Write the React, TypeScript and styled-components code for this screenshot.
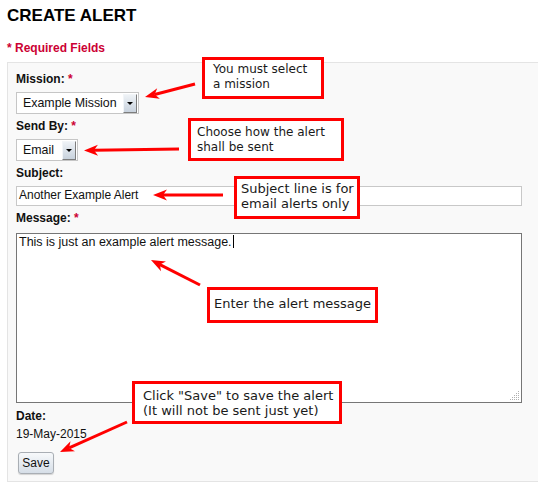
import React from 'react';
import styled, { createGlobalStyle } from 'styled-components';

const GlobalStyle = createGlobalStyle`
  html, body { margin: 0; padding: 0; background: #fff; }
  body { font-family: "Liberation Sans", Arial, sans-serif; color: #111; overflow: hidden; }
`;

const Page = styled.div`
  position: relative;
  width: 538px;
  height: 486px;
  overflow: hidden;
  padding-left: 7px;
  box-sizing: border-box;
`;

const Title = styled.h1`
  margin: 6px 0 0;
  font-size: 17px;
  line-height: 20px;
  font-weight: bold;
  color: #000;
`;

const Required = styled.div`
  margin-top: 15px;
  font-size: 12px;
  line-height: 14px;
  font-weight: bold;
  color: #cc0033;
`;

const Panel = styled.div`
  margin-top: 7px;
  width: 560px;
  box-sizing: border-box;
  background: #f9f9f9;
  border: 1px solid #e4e4e4;
  padding: 9px 0 7px 8px;
`;

const Label = styled.div<{ $mb?: number }>`
  font-size: 12px;
  line-height: 14px;
  font-weight: bold;
  color: #111;
  margin-bottom: ${(p) => p.$mb ?? 6}px;
`;

const Star = styled.span`
  color: #cc0033;
`;

const Select = styled.div<{ $w: number }>`
  display: flex;
  align-items: center;
  box-sizing: border-box;
  width: ${(p) => p.$w}px;
  height: 22px;
  margin-bottom: 5px;
  background: #fff;
  border: 1px solid #c6c6c6;
  padding-right: 1px;
`;

const SelectValue = styled.span`
  flex: 1;
  padding-left: 6px;
  font-size: 12.4px;
  color: #111;
  white-space: nowrap;
`;

const SelectButton = styled.span`
  width: 14px;
  height: 19px;
  box-sizing: border-box;
  display: flex;
  align-items: center;
  justify-content: center;
  background: linear-gradient(#eef2f6, #c8d2dd);
  border: 1px solid;
  border-color: #f2f5f8 #7d7d7d #7d7d7d #f2f5f8;
`;

const DownCaret = styled.span`
  width: 0;
  height: 0;
  border-left: 3px solid transparent;
  border-right: 3px solid transparent;
  border-top: 3px solid #000;
`;

const TextInput = styled.div`
  width: 506px;
  height: 20px;
  box-sizing: border-box;
  border: 1px solid #c8c8c8;
  background: #fff;
  padding-left: 2px;
  font-size: 12px;
  line-height: 17px;
  margin-bottom: 5px;
  white-space: nowrap;
`;

const TextArea = styled.div`
  position: relative;
  width: 506px;
  height: 170px;
  box-sizing: border-box;
  border: 1px solid #767676;
  background: #fff;
  padding: 1px 2px;
  font-size: 12.5px;
  line-height: 14px;
  margin-bottom: 6px;
`;

const TypingCaret = styled.span`
  display: inline-block;
  width: 1px;
  height: 13px;
  margin-left: 1px;
  background: #000;
  vertical-align: -2px;
`;

const Grip = styled.svg`
  position: absolute;
  right: 1px;
  bottom: 1px;
`;

const Value = styled.div`
  font-size: 12px;
  line-height: 14px;
  margin: -2px 0 11px;
  color: #111;
`;

const SaveButton = styled.button`
  display: block;
  margin-left: 2px;
  width: 36px;
  height: 22px;
  padding: 0;
  font-family: inherit;
  font-size: 12px;
  color: #111;
  border: 1px solid #a9aeb4;
  border-radius: 3px;
  background: linear-gradient(#f7f9fb, #d6dee7);
  box-shadow: 0 1px 1px rgba(0, 0, 0, 0.15);
`;

const Note = styled.div<{
  $x: number;
  $y: number;
  $w: number;
  $h: number;
  $pt: number;
  $pl: number;
  $fs: number;
}>`
  position: absolute;
  left: ${(p) => p.$x}px;
  top: ${(p) => p.$y}px;
  width: ${(p) => p.$w}px;
  height: ${(p) => p.$h}px;
  box-sizing: border-box;
  border: 3px solid #ff0000;
  background: #fff;
  padding: ${(p) => p.$pt}px 0 0 ${(p) => p.$pl}px;
  font-family: "DejaVu Sans", sans-serif;
  font-size: ${(p) => p.$fs}px;
  line-height: 15px;
  color: #1a1a1a;
  white-space: nowrap;
`;

const Overlay = styled.svg`
  position: absolute;
  left: 0;
  top: 0;
  pointer-events: none;
`;

type Pt = [number, number, number, number];
const arrows: Pt[] = [
  [195, 84, 145, 97],
  [179, 149, 84, 150.5],
  [223, 195, 153, 195],
  [200, 285, 151, 260],
  [127, 422, 60, 452],
];

function Arrow({ a }: { a: Pt }) {
  const [x1, y1, x2, y2] = a;
  const dx = x2 - x1;
  const dy = y2 - y1;
  const len = Math.hypot(dx, dy);
  const ux = dx / len;
  const uy = dy / len;
  const px = -uy;
  const py = ux;
  const L = 14;
  const W = 5.5;
  const N = 10;
  const bx = x2 - ux * L;
  const by = y2 - uy * L;
  const nx = x2 - ux * N;
  const ny = y2 - uy * N;
  const pts = [
    [x2, y2],
    [bx + px * W, by + py * W],
    [nx, ny],
    [bx - px * W, by - py * W],
  ]
    .map((p) => p.map((v) => v.toFixed(1)).join(','))
    .join(' ');
  return (
    <g>
      <line x1={x1} y1={y1} x2={nx} y2={ny} stroke="#ff0000" strokeWidth={3} />
      <polygon points={pts} fill="#ff0000" />
    </g>
  );
}

const gripDots: [number, number][] = [
  [8, 0],
  [6, 2], [8, 2],
  [4, 4], [6, 4], [8, 4],
  [2, 6], [4, 6], [6, 6], [8, 6],
  [0, 8], [2, 8], [4, 8], [6, 8], [8, 8],
];

export default function App() {
  return (
    <>
      <GlobalStyle />
      <Page>
        <Title>CREATE ALERT</Title>
        <Required>* Required Fields</Required>
        <Panel>
          <Label>
            Mission: <Star>*</Star>
          </Label>
          <Select $w={123}>
            <SelectValue>Example Mission</SelectValue>
            <SelectButton>
              <DownCaret />
            </SelectButton>
          </Select>
          <Label>
            Send By: <Star>*</Star>
          </Label>
          <Select $w={62}>
            <SelectValue>Email</SelectValue>
            <SelectButton>
              <DownCaret />
            </SelectButton>
          </Select>
          <Label>Subject:</Label>
          <TextInput>Another Example Alert</TextInput>
          <Label $mb={8}>
            Message: <Star>*</Star>
          </Label>
          <TextArea>
            This is just an example alert message.
            <TypingCaret />
            <Grip width={10} height={10} viewBox="0 0 10 10">
              {gripDots.map(([x, y], i) => (
                <rect key={i} x={x} y={y} width={1} height={1} fill="#b0b0b0" />
              ))}
            </Grip>
          </TextArea>
          <Label>Date:</Label>
          <Value>19-May-2015</Value>
          <SaveButton>Save</SaveButton>
        </Panel>

        <Overlay width={538} height={486} viewBox="0 0 538 486">
          {arrows.map((a, i) => (
            <Arrow key={i} a={a} />
          ))}
        </Overlay>

        <Note $x={202} $y={57} $w={122} $h={42} $pt={2} $pl={8} $fs={12}>
          You must select
          <br />
          a mission
        </Note>
        <Note $x={188} $y={118} $w={156} $h={43} $pt={4} $pl={6} $fs={12}>
          Choose how the alert
          <br />
          shall be sent
        </Note>
        <Note $x={234} $y={176} $w={126} $h={43} $pt={2} $pl={4} $fs={13}>
          Subject line is for
          <br />
          email alerts only
        </Note>
        <Note $x={207} $y={287} $w={171} $h={36} $pt={6} $pl={4} $fs={13}>
          Enter the alert message
        </Note>
        <Note $x={132} $y={381} $w={210} $h={43} $pt={4} $pl={8} $fs={13}>
          Click "Save" to save the alert
          <br />
          (It will not be sent just yet)
        </Note>
      </Page>
    </>
  );
}
